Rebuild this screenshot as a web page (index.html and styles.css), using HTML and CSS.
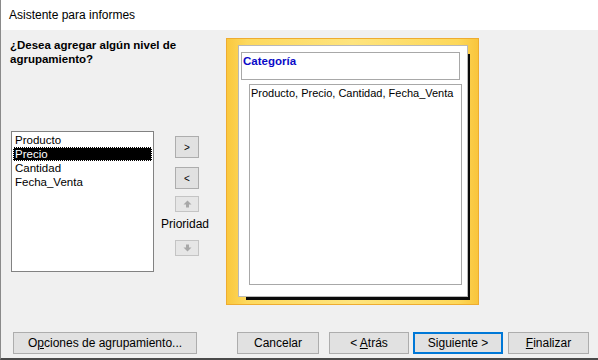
FILE: index.html
```html
<!DOCTYPE html>
<html lang="es">
<head>
<meta charset="utf-8">
<link rel="stylesheet" href="styles.css">
</head>
<body>
<div class="window">
  <div class="titlebar">Asistente para informes</div>
  <div class="main">
    <div class="content">
      <div class="left">
        <div class="question">¿Desea agregar algún nivel de agrupamiento?</div>
        <div class="listbox">
          <div class="item">Producto</div>
          <div class="item selected">Precio</div>
          <div class="item">Cantidad</div>
          <div class="item">Fecha_Venta</div>
        </div>
      </div>
      <div class="mid">
        <div class="sbtn big b1">&gt;</div>
        <div class="sbtn big b2">&lt;</div>
        <div class="sbtn small b3">
          <svg width="9" height="8" viewBox="0 0 9 8"><path d="M4.5 0.5 L8.5 4.5 L6 4.5 L6 7.5 L3 7.5 L3 4.5 L0.5 4.5 Z" fill="#a8a8a8"/></svg>
        </div>
        <div class="prio">Prioridad</div>
        <div class="sbtn small b4">
          <svg width="9" height="8" viewBox="0 0 9 8"><path d="M4.5 7.5 L8.5 3.5 L6 3.5 L6 0.5 L3 0.5 L3 3.5 L0.5 3.5 Z" fill="#a8a8a8"/></svg>
        </div>
      </div>
      <div class="frame">
        <div class="paper">
          <div class="catbox">Categoría</div>
          <div class="fieldbox">Producto, Precio, Cantidad, Fecha_Venta</div>
        </div>
      </div>
    </div>
    <div class="footer">
      <div class="btn opt"><span>O<u>p</u>ciones de agrupamiento...</span></div>
      <div class="btn cancel"><span>Cancelar</span></div>
      <div class="btn back"><span>&lt; <u>A</u>trás</span></div>
      <div class="btn next"><span>Si<u>g</u>uiente &gt;</span></div>
      <div class="btn fin"><span><u>F</u>inalizar</span></div>
    </div>
  </div>
</div>
</body>
</html>
```

FILE: styles.css
```css
* { box-sizing: border-box; }
html, body { margin: 0; padding: 0; }
body {
  width: 598px;
  height: 360px;
  overflow: hidden;
  font-family: "Liberation Sans", Arial, sans-serif;
  font-size: 12px;
  color: #000;
  background: #f0f0f0;
}
.window {
  width: 598px;
  height: 360px;
  border-left: 1px solid #8a8a8a;
  border-bottom: 2px solid #4a4a4a;
  background: #f0f0f0;
  display: flex;
  flex-direction: column;
}
.titlebar {
  height: 30px;
  background: #fff;
  line-height: 30px;
  padding-left: 8px;
  font-size: 12px;
  flex: none;
}
.main {
  flex: 1;
  display: flex;
  flex-direction: column;
}
.content {
  display: flex;
  height: 302px;
}
.left {
  margin-left: 9px;
  width: 143px;
}
.question {
  margin-top: 8px;
  font-weight: bold;
  line-height: 14px;
  font-size: 11.5px;
  width: 200px;
}
.listbox {
  margin-top: 65px;
  width: 143px;
  height: 141px;
  margin-left: 1px;
  background: #fff;
  border: 1px solid #828282;
  padding: 1px 0 0 0;
  font-size: 11.5px;
}
.item {
  height: 14px;
  line-height: 14px;
  padding-left: 3px;
}
.item.selected {
  background: #000;
  color: #fff;
  outline: 1px dotted #fff;
  outline-offset: -1px;
  margin: 0 1px;
  padding-left: 2px;
}
.mid {
  width: 73px;
  display: flex;
  flex-direction: column;
}
.sbtn {
  width: 24px;
  margin-left: 22px;
  background: #e1e1e1;
  border: 1px solid #adadad;
  display: flex;
  align-items: center;
  justify-content: center;
  font-size: 10px;
}
.sbtn.big { height: 22px; }
.sbtn.small { height: 16px; border-color: #c4c4c4; background: #e6e6e6; }
.b1 { margin-top: 106px; }
.b2 { margin-top: 9px; }
.b3 { margin-top: 7px; }
.prio {
  margin-top: 5px;
  height: 14px;
  line-height: 14px;
  margin-left: 8px;
}
.b4 { margin-top: 9px; }
.frame {
  margin-top: 8px;
  width: 253px;
  height: 267px;
  border: 1px solid #eeac30;
  background: linear-gradient(to right, #fac83e 0%, #fdd95e 8%, #fee47e 50%, #fdd85a 92%, #f9c53c 100%);
  padding: 6px 0 0 11px;
}
.paper {
  width: 230px;
  height: 252px;
  background: #fff;
  border: 1px solid #b9b9b9;
  box-shadow: 5px 6px 0 -3px #0a0a0a;
  padding: 6px 0 0 2px;
}
.catbox {
  width: 219px;
  height: 28px;
  border: 1px solid #a8a8a8;
  color: #0a0ac8;
  font-weight: bold;
  font-size: 11.5px;
  line-height: 14px;
  padding: 1px 0 0 1px;
}
.fieldbox {
  margin-top: 4px;
  margin-left: 8px;
  width: 213px;
  height: 201px;
  border: 1px solid #a8a8a8;
  font-size: 11px;
  line-height: 14px;
  padding: 1px 0 0 1px;
  white-space: nowrap;
  overflow: hidden;
}
.footer {
  display: flex;
  padding-left: 12px;
}
.btn {
  height: 22px;
  background: #e1e1e1;
  border: 1px solid #adadad;
  display: flex;
  align-items: center;
  justify-content: center;
  font-size: 12px;
}
.opt { width: 184px; }
.cancel { width: 82px; margin-left: 40px; }
.back { width: 80px; margin-left: 10px; }
.next { width: 90px; margin-left: 4px; border: 2px solid #0078d7; }
.fin { width: 81px; margin-left: 5px; }
```
